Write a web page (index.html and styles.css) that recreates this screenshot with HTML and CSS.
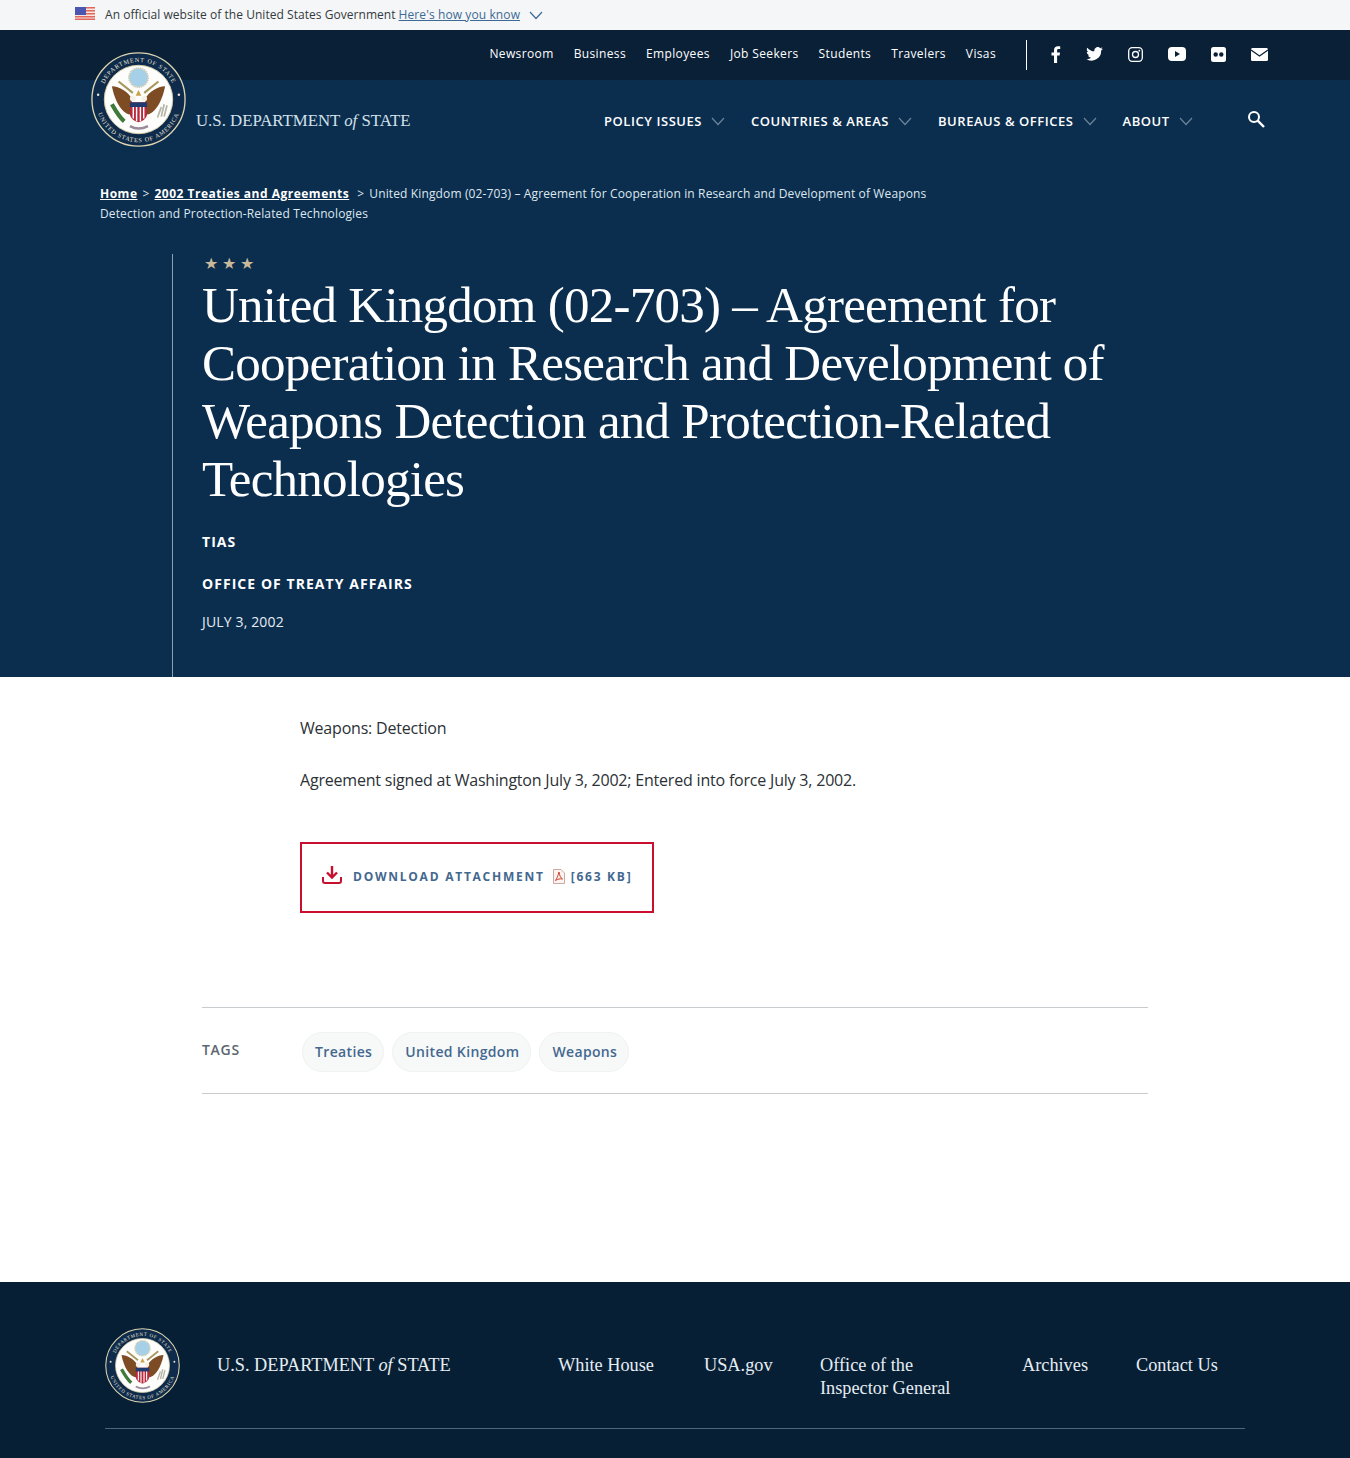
FILE: index.html
```html
<!DOCTYPE html>
<html>
    <head>
        <meta charset="UTF-8">
        <title>United Kingdom (02-703)</title>
        <link rel="stylesheet" href="styles.css">
    </head>
    <body>
        <svg class="defs" width="0" height="0">
            <defs>
                <path id="sealArc" d="M10.500 50 A39.500 39.500 0 0 1 89.500 50"/>
                <path id="sealArcLow" d="M5 50 A45 45 0 0 0 95 50"/>
                <symbol id="seal" viewBox="0 0 100 100">
                    <circle cx="50" cy="50" r="49" fill="#0f2b4c" stroke="#ddd5b0" stroke-width="1.400"/>
                    <circle cx="50" cy="50" r="36" fill="#fdfdfb" stroke="#d9cfa8" stroke-width="1"/>
                    <text class="sealText"><textPath href="#sealArc" startOffset="50%" text-anchor="middle">DEPARTMENT OF STATE</textPath></text>
                    <text class="sealText"><textPath href="#sealArcLow" startOffset="50%" text-anchor="middle">UNITED STATES OF AMERICA</textPath></text>
                    <circle cx="7.500" cy="45" r="1.300" fill="#e8e4d4"/>
                    <circle cx="92.500" cy="45" r="1.300" fill="#e8e4d4"/>
                    <circle cx="50" cy="27" r="10" fill="#a6cfe8" stroke="#cfcdb8" stroke-width="2" stroke-dasharray="1.500 .8"/>
                    <path d="M29 31 L44 43 M71 31 L56 43" stroke="#a8965c" stroke-width="2.200"/>
                    <path d="M22 36 C30 36 39 42 43 49 L43 66 C33 66 25 52 22 36 Z" fill="#7d4b24"/>
                    <path d="M78 36 C70 36 61 42 57 49 L57 66 C67 66 75 52 78 36 Z" fill="#7d4b24"/>
                    <circle cx="44" cy="49" r="3" fill="#f4f1e6"/>
                    <circle cx="56" cy="49" r="3" fill="#f4f1e6"/>
                    <path d="M50 40 L53 46 L47 46 Z" fill="#c9a24a"/>
                    <path d="M41 53 H59 V65 C59 70 54 73 50 74 C46 73 41 70 41 65 Z" fill="#b8293d"/>
                    <path d="M41 53 H59 V58 H41 Z" fill="#1f3a6e"/>
                    <path d="M44.500 58 V70 M48 58 V73 M52 58 V73 M55.500 58 V70" stroke="#fff" stroke-width="1.500"/>
                    <path d="M22 55 C25 60 29 68 35 73" stroke="#3f7a3a" stroke-width="4.500" fill="none"/>
                    <path d="M80 56 L77 68 M77 55 L74 68 M74 58 L70 69" stroke="#b5b5a8" stroke-width="1.800"/>
                    <path d="M41 78 Q50 83 60 78" stroke="#9a8a9a" stroke-width="2.500" fill="none"/>
                </symbol>
                <symbol id="chev" viewBox="0 0 14 9">
                    <path d="M1 1 L7 7.500 L13 1" fill="none" stroke="currentColor" stroke-width="1.200"/>
                </symbol>
            </defs>
        </svg>

        <div class="govBanner">
            <svg class="flag" width="20" height="13" viewBox="0 0 20 13">
                <rect width="20" height="13" fill="#f7e6df"/>
                <path d="M0 0H20V1.500H0ZM0 3H20V4.500H0ZM0 6H20V7.500H0ZM0 9H20V10.500H0ZM0 11.500H20V13H0Z" fill="#e0685f"/>
                <rect width="11" height="8" fill="#4a56b0"/>
            </svg>
            <span class="govText">An official website of the United States Government</span>
            <a class="govLink">Here's how you know</a>
            <svg class="govChev" width="14" height="9"><use href="#chev"/></svg>
        </div>

        <div class="topBar">
            <nav class="topLinks">
                <a>Newsroom</a><a>Business</a><a>Employees</a><a>Job Seekers</a><a>Students</a><a>Travelers</a><a>Visas</a>
            </nav>
            <div class="social">
                <svg width="10" height="17" viewBox="0 0 10 17"><path fill="#fff" d="M3 17V9.500H.5V6.600H3V4.400C3 1.600 4.600.3 6.900.3c1.100 0 2 .1 2.300.1v2.600H7.600c-1.200 0-1.500.6-1.500 1.500v2.100h2.900l-.4 2.900H6.100V17Z"/></svg>
                <svg width="17" height="14" viewBox="0 0 24 20"><path fill="#fff" d="M24 2.400c-.9.400-1.800.7-2.800.8 1-.6 1.800-1.600 2.200-2.700-1 .6-2 1-3.100 1.200A4.900 4.900 0 0 0 11.900 6.200C7.800 6 4.200 4 1.700.9c-1.300 2.200-.7 5.100 1.500 6.600-.8 0-1.600-.2-2.200-.6 0 2.300 1.600 4.400 3.900 4.900-.7.200-1.500.2-2.200.1.600 2 2.400 3.400 4.600 3.400A9.900 9.900 0 0 1 0 17.300 14 14 0 0 0 21.500 4.900c1-.7 1.800-1.500 2.500-2.500Z"/></svg>
                <svg width="15" height="15" viewBox="0 0 15 15"><rect x=".7" y=".7" width="13.600" height="13.600" rx="3.500" fill="none" stroke="#fff" stroke-width="1.300"/><circle cx="7.500" cy="7.500" r="3" fill="none" stroke="#fff" stroke-width="1.300"/><circle cx="11.300" cy="3.700" r=".9" fill="#fff"/></svg>
                <svg width="18" height="14" viewBox="0 0 18 14"><rect width="18" height="14" rx="4" fill="#fff"/><path d="M7 4 L12 7 L7 10 Z" fill="#0a2036"/></svg>
                <svg width="15" height="15" viewBox="0 0 15 15"><rect width="15" height="15" rx="2.500" fill="#fff"/><circle cx="4.700" cy="7.500" r="2.200" fill="#0a2036"/><circle cx="10.300" cy="7.500" r="2.200" fill="#0a2036"/></svg>
                <svg width="17" height="13" viewBox="0 0 17 13"><rect width="17" height="13" rx="1.500" fill="#fff"/><path d="M0 2 L8.500 8 L17 2" fill="none" stroke="#0a2036" stroke-width="1.300"/></svg>
            </div>
        </div>

        <div class="hero">
            <svg class="heroSeal"><use href="#seal"/></svg>
            <header class="mainHead">
                <div class="wordmark">U.S. DEPARTMENT <i>of</i> STATE</div>
                <nav class="mainNav">
                    <a>POLICY ISSUES <svg width="14" height="9"><use href="#chev"/></svg></a>
                    <a>COUNTRIES &amp; AREAS <svg width="14" height="9"><use href="#chev"/></svg></a>
                    <a>BUREAUS &amp; OFFICES <svg width="14" height="9"><use href="#chev"/></svg></a>
                    <a>ABOUT <svg width="14" height="9"><use href="#chev"/></svg></a>
                </nav>
                <svg class="searchIcon" width="18" height="18" viewBox="0 0 18 18"><circle cx="7" cy="7" r="5" fill="none" stroke="#fff" stroke-width="2"/><path d="M10.700 10.700 L17 17" stroke="#fff" stroke-width="2.400"/></svg>
            </header>
            <div class="crumbs">
                <a>Home</a><span class="sep">&gt;</span><a>2002 Treaties and Agreements</a><span class="sep wide">&gt;</span><span>United Kingdom (02-703) – Agreement for Cooperation in Research and Development of Weapons</span><br>
                <span>Detection and Protection-Related Technologies</span>
            </div>
            <div class="heroBody">
                <div class="stars">★ ★ ★</div>
                <h1>United Kingdom (02-703) – Agreement for Cooperation in Research and Development of Weapons Detection and Protection-Related Technologies</h1>
                <div class="kicker first">TIAS</div>
                <div class="kicker">OFFICE OF TREATY AFFAIRS</div>
                <div class="date">JULY 3, 2002</div>
            </div>
        </div>

        <main class="content">
            <p>Weapons: Detection</p>
            <p>Agreement signed at Washington July 3, 2002; Entered into force July 3, 2002.</p>
            <a class="download">
                <svg class="dlIcon" width="20" height="18" viewBox="0 0 20 18"><path d="M10 0 V11 M5 6.500 L10 11.500 L15 6.500" fill="none" stroke="#c8102e" stroke-width="2.400"/><path d="M1 11 V15 Q1 17 3 17 H17 Q19 17 19 15 V11" fill="none" stroke="#c8102e" stroke-width="2"/></svg>
                <span class="dlText">DOWNLOAD ATTACHMENT</span>
                <svg class="pdf" width="12" height="15" viewBox="0 0 12 15"><path d="M.5.500 H8 L11.500 4 V14.500 H.5 Z" fill="#fdf3f0" stroke="#c9a9a0"/><path d="M6 3 C5 7 4 9 2.500 11.500 C5 10 7 9.500 9.500 10 C8 9 6.500 7 6 3 Z" fill="none" stroke="#c8402e"/></svg>
                <span class="dlText">[663 KB]</span>
            </a>
        </main>

        <div class="tagsRow">
            <span class="tagsLabel">TAGS</span>
            <a class="tag">Treaties</a><a class="tag">United Kingdom</a><a class="tag">Weapons</a>
        </div>

        <footer class="foot">
            <div class="footTop">
                <svg class="footSeal"><use href="#seal"/></svg>
                <div class="footMark">U.S. DEPARTMENT <i>of</i> STATE</div>
                <nav class="footLinks">
                    <a class="fl1">White House</a>
                    <a class="fl2">USA.gov</a>
                    <a class="fl3">Office of the<br>Inspector General</a>
                    <a class="fl4">Archives</a>
                    <a>Contact Us</a>
                </nav>
            </div>
        </footer>
    </body>
</html>
```

FILE: styles.css
```css
body {
    margin: 0;
    background: #ffffff;
    font-family: "Open Sans", sans-serif;
    color: #212529;
    overflow-x: hidden;
}

.defs {
    position: absolute;
}

.sealText {
    font-family: "Liberation Serif", serif;
    font-size: 6.5px;
    letter-spacing: 0.9px;
    fill: #e8e4d4;
}

/* gov banner */
.govBanner {
    height: 30px;
    box-sizing: border-box;
    padding: 0 0 2px 75px;
    background: #f5f6f7;
    display: flex;
    align-items: center;
    font-size: 12px;
    letter-spacing: 0.04px;
}

.flag {
    margin-right: 10px;
    margin-top: -1px;
}

.govText {
    color: #333a40;
}

.govLink {
    color: #3d6a94;
    text-decoration: underline;
    margin-left: 3px;
    letter-spacing: 0.1px;
}

.govChev {
    margin: 2px 0 0 9px;
    color: #3d6a94;
}

/* top bar */
.topBar {
    height: 50px;
    background: #0a2036;
    display: flex;
    align-items: center;
    justify-content: flex-end;
    padding-right: 82px;
}

.topLinks {
    display: flex;
    gap: 20px;
    padding: 0 30px 4px 0;
    height: 30px;
    box-sizing: border-box;
    align-items: center;
    border-right: 1px solid #ffffff;
    font-size: 12px;
    letter-spacing: 0.37px;
    color: #ffffff;
}

.social {
    display: flex;
    align-items: center;
    gap: 25px;
    margin: -2px 0 0 24px;
}

/* hero */
.hero {
    position: relative;
    height: 597px;
    background: #0b2e4f;
    color: #ffffff;
}

.heroSeal {
    position: absolute;
    left: 91px;
    top: -28px;
    width: 95px;
    height: 95px;
}

.mainHead {
    display: flex;
    align-items: center;
    height: 82px;
    padding-left: 196px;
}

.wordmark {
    font-family: "Liberation Serif", serif;
    font-size: 16.8px;
    color: #d3e0ea;
    width: 408px;
    white-space: nowrap;
}

.mainNav {
    display: flex;
    gap: 26px;
    font-size: 13px;
    font-weight: 600;
    letter-spacing: 0.55px;
}

.mainNav a {
    display: flex;
    align-items: center;
    gap: 9px;
}

.mainNav svg {
    color: #6d8398;
}

.searchIcon {
    margin-left: 54px;
    margin-top: -4px;
}

.crumbs {
    margin: 22px 0 0 100px;
    width: 850px;
    font-size: 12px;
    line-height: 20px;
    letter-spacing: 0.13px;
    color: #dfe7ee;
}

.crumbs a {
    color: #ffffff;
    font-weight: 700;
    letter-spacing: 0.5px;
    text-decoration: underline;
}

.sep {
    margin: 0 5px;
}

.sep.wide {
    margin: 0 5px 0 8px;
}

.heroBody {
    position: absolute;
    left: 172px;
    top: 174px;
    bottom: 0;
    width: 950px;
    padding-left: 29px;
    border-left: 1px solid #8ba0b2;
}

.stars {
    font-size: 15.5px;
    line-height: 18px;
    color: #c9b99a;
    margin-left: 2px;
}

h1 {
    margin: 4px 0 0 0;
    font-family: "Liberation Serif", serif;
    font-weight: 400;
    font-size: 51px;
    line-height: 58px;
    letter-spacing: -0.75px;
}

.kicker {
    margin-top: 22px;
    font-size: 14px;
    line-height: 20px;
    font-weight: 700;
    letter-spacing: 1.05px;
}

.kicker.first {
    margin-top: 24px;
}

.date {
    margin-top: 18px;
    font-size: 14px;
    line-height: 20px;
    letter-spacing: 0.15px;
    color: #e6edf3;
}

/* main */
.content {
    padding: 39px 0 0 300px;
    height: 291px;
    font-size: 16px;
    letter-spacing: -0.2px;
    color: #2c3136;
}

.content p {
    margin: 0 0 28px 0;
    line-height: 24px;
}

.download {
    display: inline-flex;
    align-items: center;
    box-sizing: border-box;
    width: 354px;
    height: 71px;
    margin-top: 22px;
    padding: 0 0 2px 20px;
    border: 2px solid #c8102e;
}

.dlIcon {
    margin-top: -4px;
}

.dlText {
    font-size: 12px;
    font-weight: 700;
    letter-spacing: 1.75px;
    color: #43688f;
}

.download .dlText:nth-of-type(1) {
    margin: 0 8px 0 11px;
}

.pdf {
    margin-right: 6px;
}

/* tags */
.tagsRow {
    display: flex;
    align-items: center;
    gap: 8px;
    height: 85px;
    margin: 0 202px 188px 202px;
    border-top: 1px solid #c9ccce;
    border-bottom: 1px solid #c9ccce;
}

.tagsLabel {
    width: 92px;
    font-size: 14px;
    font-weight: 600;
    letter-spacing: 0.7px;
    color: #5c6670;
    margin-top: -2px;
}

.tag {
    padding: 0 11px 0 12px;
    height: 38px;
    margin-top: 2px;
    line-height: 38px;
    border: 1px solid #f1f1f0;
    border-radius: 20px;
    background: #f7f8f8;
    font-size: 14px;
    font-weight: 600;
    letter-spacing: 0.35px;
    color: #43688f;
}

/* footer */
.foot {
    height: 176px;
    background: #071f35;
    padding: 46px 105px 0 105px;
    box-sizing: border-box;
    color: #e6edf3;
}

.footTop {
    display: flex;
    height: 101px;
    border-bottom: 1px solid #4e6579;
    box-sizing: border-box;
}

.footSeal {
    width: 75px;
    height: 75px;
    flex: none;
}

.footMark {
    font-family: "Liberation Serif", serif;
    font-size: 18.3px;
    margin: 27px 0 0 37px;
    width: 341px;
    white-space: nowrap;
}

.footLinks {
    display: flex;
    font-family: "Liberation Serif", serif;
    font-size: 18.3px;
    line-height: 23px;
    padding-top: 26px;
}

.fl1 {
    width: 146px;
}

.fl2 {
    width: 116px;
}

.fl3 {
    width: 202px;
}

.fl4 {
    width: 114px;
}
```
